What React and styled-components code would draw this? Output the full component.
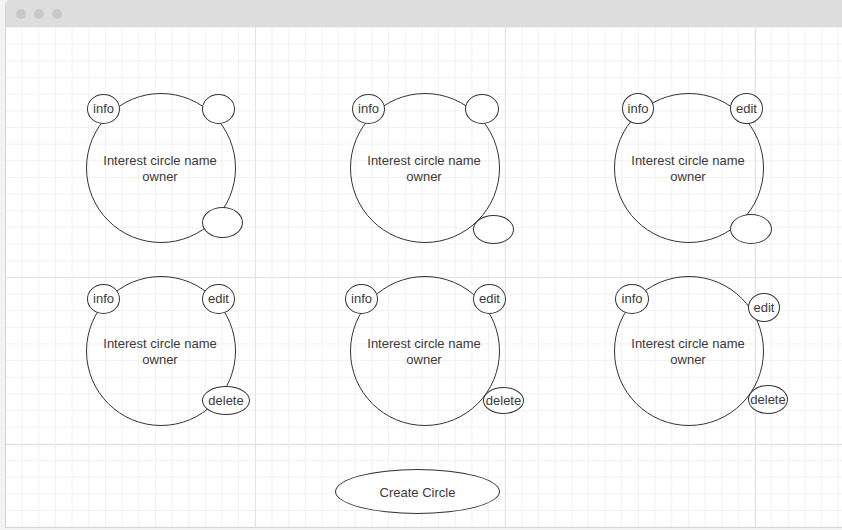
import React from "react";
import styled, { createGlobalStyle } from "styled-components";

const Global = createGlobalStyle`
  html, body { margin: 0; padding: 0; }
  body { background: #f3f3f3; font-family: "Liberation Sans", Arial, sans-serif; }
`;

const Page = styled.div`
  height: 530px;
  padding-left: 5px;
  box-sizing: border-box;
  overflow: hidden;
`;

const Frame = styled.div`
  height: 528px;
  box-sizing: border-box;
  border-left: 1px solid #d6d6d6;
  border-bottom: 1px solid #d6d6d6;
  border-top-left-radius: 5px;
  overflow: hidden;
  display: flex;
  flex-direction: column;
  background: #fff;
`;

const TitleBar = styled.div`
  flex: 0 0 27px;
  background: #dddddd;
  display: flex;
  align-items: center;
  gap: 8px;
  padding-left: 10px;
`;

const Dot = styled.span`
  width: 10px;
  height: 10px;
  border-radius: 50%;
  background: #c8c8c8;
`;

const Canvas = styled.div`
  flex: 1;
  display: flex;
  flex-direction: column;
  padding: 66px 0 0 80px;
  background-color: #fff;
  background-image:
    linear-gradient(to right, #e3e3e3 1px, transparent 1px),
    linear-gradient(to bottom, transparent 250px, #e3e3e3 250px, #e3e3e3 251px, transparent 251px, transparent 417px, #e3e3e3 417px, #e3e3e3 418px, transparent 418px),
    linear-gradient(to right, #f1f1f1 1px, transparent 1px),
    linear-gradient(to bottom, #f1f1f1 1px, transparent 1px);
  background-size: 250px 100%, 100% 100%, 16.6667px 16.6667px, 16.6667px 16.6667px;
  background-position: -1px 0, 0 0, -1px 0, 0 0;
`;

const CardGrid = styled.div`
  display: grid;
  grid-template-columns: repeat(3, 150px);
  grid-auto-rows: 150px;
  column-gap: 114px;
  row-gap: 33px;
`;

const Circle = styled.div`
  position: relative;
  width: 150px;
  height: 150px;
  box-sizing: border-box;
  border: 1px solid #333;
  border-radius: 50%;
  display: flex;
  align-items: center;
  justify-content: center;
  text-align: center;
  font-size: 13px;
  line-height: 16px;
  color: #3a3a3a;
`;

const Label = styled.span`
  padding-top: 2px;
  padding-right: 2px;
`;

const Badge = styled.div`
  position: absolute;
  left: ${(p) => p.$x}px;
  top: ${(p) => p.$y}px;
  width: ${(p) => p.$w}px;
  height: ${(p) => p.$h}px;
  box-sizing: border-box;
  border: 1px solid #333;
  border-radius: 50%;
  background: #fff;
  display: flex;
  align-items: center;
  justify-content: center;
  font-size: 13px;
  color: #3a3a3a;
`;

const Footer = styled.div`
  display: flex;
  margin-top: 43px;
  padding-left: 249px;
`;

const CreateButton = styled.div`
  width: 165px;
  height: 45px;
  box-sizing: border-box;
  border: 1px solid #333;
  border-radius: 50%;
  background: #fff;
  display: flex;
  align-items: center;
  justify-content: center;
  padding-top: 2px;
  font-size: 13px;
  color: #3a3a3a;
`;

const cards = [
  [
    { x: 0, y: 0, w: 33, h: 30, t: "info" },
    { x: 115, y: 0, w: 33, h: 30, t: "" },
    { x: 115, y: 113, w: 41, h: 31, t: "" },
  ],
  [
    { x: 1, y: 0, w: 33, h: 30, t: "info" },
    { x: 114, y: 0, w: 34, h: 30, t: "" },
    { x: 122, y: 121, w: 41, h: 29, t: "" },
  ],
  [
    { x: 7, y: -1, w: 32, h: 31, t: "info" },
    { x: 115, y: -1, w: 33, h: 31, t: "edit" },
    { x: 115, y: 120, w: 42, h: 30, t: "" },
  ],
  [
    { x: 0, y: 7, w: 33, h: 30, t: "info" },
    { x: 115, y: 7, w: 33, h: 30, t: "edit" },
    { x: 115, y: 109, w: 48, h: 29, t: "delete" },
  ],
  [
    { x: -6, y: 7, w: 33, h: 30, t: "info" },
    { x: 122, y: 7, w: 33, h: 30, t: "edit" },
    { x: 132, y: 110, w: 41, h: 27, t: "delete" },
  ],
  [
    { x: 0, y: 7, w: 34, h: 30, t: "info" },
    { x: 133, y: 16, w: 32, h: 29, t: "edit" },
    { x: 133, y: 108, w: 40, h: 29, t: "delete" },
  ],
];

export default function App() {
  return (
    <>
      <Global />
      <Page>
        <Frame>
          <TitleBar>
            <Dot />
            <Dot />
            <Dot />
          </TitleBar>
          <Canvas>
            <CardGrid>
              {cards.map((badges, i) => (
                <Circle key={i}>
                  <Label>
                    Interest circle name
                    <br />
                    owner
                  </Label>
                  {badges.map((b, j) => (
                    <Badge key={j} $x={b.x} $y={b.y} $w={b.w} $h={b.h}>
                      {b.t}
                    </Badge>
                  ))}
                </Circle>
              ))}
            </CardGrid>
            <Footer>
              <CreateButton>Create Circle</CreateButton>
            </Footer>
          </Canvas>
        </Frame>
      </Page>
    </>
  );
}
